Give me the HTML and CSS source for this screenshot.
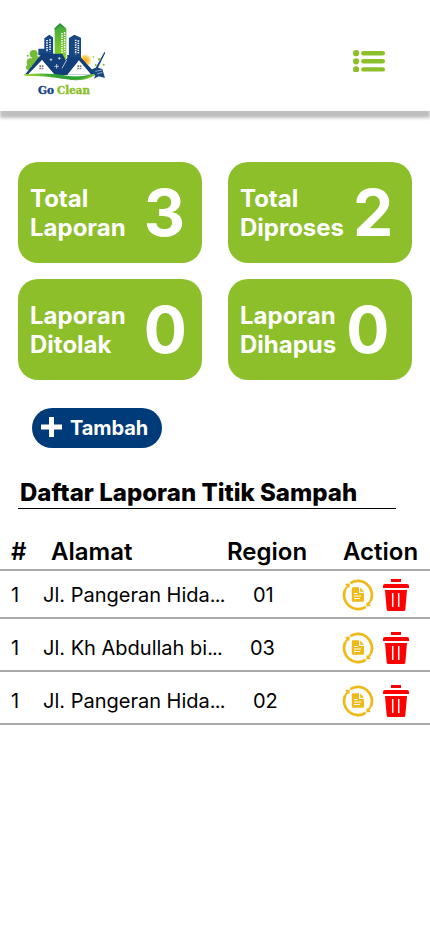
FILE: index.html
```html
<!DOCTYPE html>
<html lang="id">
<head>
<meta charset="utf-8">
<meta name="viewport" content="width=device-width, initial-scale=1">
<title>Go Clean</title>
<link rel="stylesheet" href="styles.css">
</head>
<body>
<svg class="symbols" aria-hidden="true">
  <symbol id="report" viewBox="0 0 32 32">
    <g fill="none" stroke="#efb918" stroke-width="2.8">
      <path d="M8.300 4.200A14 14 0 0 1 28.800 21.500"/>
      <path d="M23.700 27.800A14 14 0 0 1 3.200 10.500"/>
    </g>
    <path fill="#efb918" d="M3 4.900l4.800-.5-.5 4.600-1.300-.7-2 3-1.800-1 2.300-3.500zM29 27.100l-4.800.5.500-4.600 1.300.7 2-3 1.800 1-2.300 3.500z"/>
    <path fill="#efb918" d="M11 8.300h6v5.600h5v7.700q0 1.200-1.200 1.200H11q-1.200 0-1.200-1.200V9.500q0-1.200 1.200-1.200zM18.200 8.300l3.800 4.400h-3.800z"/>
    <path stroke="#fff" stroke-width="1.100" d="M12 14.500h3.600M12 17h7M12 19.500h6"/>
  </symbol>
  <symbol id="trash" viewBox="0 0 26 32">
    <path fill="#f00" d="M8 0h10v3H8zM2 5h22q2 0 2 2v2H0V7Q0 5 2 5zM2 11h22l-1.700 19.500q-.2 1.500-1.700 1.500H5.400q-1.500 0-1.700-1.500z"/>
    <path stroke="#fff" stroke-width="1.500" d="M9.700 14v14M15.700 14v14"/>
  </symbol>
</svg>

<header class="topbar">
  <svg class="logo" viewBox="0 0 300 270" role="img" aria-label="Go Clean">
    <defs>
      <linearGradient id="tower" x2="0" y2="1"><stop stop-color="#3fa83b"/><stop offset="1" stop-color="#91d52b"/></linearGradient>
      <linearGradient id="lawn"><stop stop-color="#a5d93b"/><stop offset=".5" stop-color="#239a34"/><stop offset="1" stop-color="#a3d432"/></linearGradient>
      <radialGradient id="sun"><stop stop-color="#f6a51c"/><stop offset=".55" stop-color="#ffc94f"/><stop offset="1" stop-color="#fff"/></radialGradient>
    </defs>
    <circle cx="210" cy="137" r="21" fill="url(#sun)"/>
    <g fill="#75bd35"><circle cx="56" cy="117" r="12"/><circle cx="47" cy="142" r="12"/><circle cx="62" cy="134" r="12"/><circle cx="41" cy="157" r="8"/><circle cx="38" cy="122" r="3"/></g>
    <path fill="#174783" d="M88 70l15-11 12 9v62H88zM70 101h18v20H70zM161 70l17-11 20 9v65h-37z"/>
    <path fill="#fff" d="M115 66h4v62h-4zM157 66h4v62h-4z"/>
    <path fill="url(#tower)" d="M119 40l16-15 19 16v91h-35z"/>
    <path fill="#2c943b" d="M119 40l16-15 19 16-19-8-16 12z"/>
    <g fill="none" stroke="#fff" stroke-width="5" stroke-dasharray="4 3">
      <path d="M96 75v36M105 73v36M141 54v62M149 52v60M182 74v44M190 76v42"/>
    </g>
    <path fill="#123f7a" d="M80 116h62l10 19 5-6v-9h8l1 7h31l49 53h-16H119L81 135l-44 45h-8z"/>
    <path fill="#fff" d="M42 179l39-43 38 43zM157 179l35-43 37 43z"/>
    <path fill="none" stroke="#fff" stroke-width="2" d="M141 160l14-25"/>
    <path stroke="#fff" stroke-width="2" d="M125 147v14M118 154h14M108 130v8M104 134h8M133 126v8M129 130h8"/>
    <path fill="#777" d="M73 151h5v5h-5zM80 151h5v5h-5zM73 158h5v5h-5zM80 158h5v5h-5zM187 151h5v5h-5zM194 151h5v5h-5zM187 158h5v5h-5zM194 158h5v5h-5z"/>
    <path fill="url(#lawn)" d="M28 178c48-5 92-2 128 4 39 5 72 0 103-14-31 26-64 32-104 25-42-7-75-11-127-10z"/>
    <path fill="#2fa23a" d="M82 178c40 0 68 7 92 8 24 0 42-3 60-10-25 17-51 19-79 15-28-5-46-9-73-13z"/>
    <path fill="#174783" d="M268 111l3 2-22 45 13 4 8 27-19-5-14 7 4-10-17-15 18-8z"/>
    <g fill="#82bd39"><circle cx="242" cy="150" r="3"/><circle cx="253" cy="133" r="4"/><circle cx="266" cy="149" r="3"/><circle cx="235" cy="126" r="2.500"/></g>
    <path stroke="#fff" stroke-width="1.500" d="M241 169l20-4M246 177l16-5"/>
    <g class="brand">
      <text x="69" y="236" textLength="48" lengthAdjust="spacingAndGlyphs" fill="#174783" stroke="#174783">Go</text>
      <text x="126" y="236" textLength="99" lengthAdjust="spacingAndGlyphs" fill="#8bbf2a" stroke="#8bbf2a">Clean</text>
    </g>
  </svg>
  <svg class="menu" viewBox="0 0 32 22" role="img" aria-label="Menu">
    <g fill="#8cbf2a"><circle cx="3.100" cy="3.200" r="3.100"/><circle cx="3.100" cy="11.300" r="3.100"/><circle cx="3.100" cy="19.400" r="3.100"/></g>
    <path stroke="#8cbf2a" stroke-width="4.400" stroke-linecap="round" d="M10.300 3.200h19.500M10.300 11.300h19.500M10.300 19.400h19.500"/>
  </svg>
</header>

<main>
  <section class="stats">
    <article class="card"><h2>Total<br>Laporan</h2><strong class="wide">3</strong></article>
    <article class="card"><h2>Total<br>Diproses</h2><strong>2</strong></article>
    <article class="card"><h2>Laporan<br>Ditolak</h2><strong class="wide">0</strong></article>
    <article class="card"><h2>Laporan<br>Dihapus</h2><strong class="deleted">0</strong></article>
  </section>

  <button class="add" type="button">
    <svg viewBox="0 0 21 20" aria-hidden="true"><path d="M10.500 0v20M0 10h21"/></svg>
    <span>Tambah</span>
  </button>

  <h1>Daftar Laporan Titik Sampah</h1>

  <section class="table">
    <div class="row head"><span>#</span><span class="address">Alamat</span><span class="region">Region</span><span class="action">Action</span></div>
    <div class="row"><span>1</span><span>Jl. Pangeran Hida<span class="dots">...</span></span><span class="region">01</span><span class="action"><svg class="report"><use href="#report"/></svg><svg class="trash"><use href="#trash"/></svg></span></div>
    <div class="row"><span>1</span><span>Jl. Kh Abdullah bi<span class="dots">...</span></span><span class="region near">03</span><span class="action"><svg class="report"><use href="#report"/></svg><svg class="trash"><use href="#trash"/></svg></span></div>
    <div class="row"><span>1</span><span>Jl. Pangeran Hida<span class="dots">...</span></span><span class="region">02</span><span class="action"><svg class="report"><use href="#report"/></svg><svg class="trash"><use href="#trash"/></svg></span></div>
  </section>
</main>
</body>
</html>
```
FILE: styles.css
```css
* { box-sizing: border-box; }
body {
  margin: 0;
  min-height: 932px;
  background: #fff;
  color: #000;
  font-family: Inter, sans-serif;
}
svg { display: block; flex: none; }
.symbols { display: none; }
.topbar {
  display: flex;
  align-items: flex-start;
  justify-content: space-between;
  height: 111px;
  padding: 15px 45px 0 15px;
  box-shadow: 0 7px 3px rgba(0, 0, 0, .25);
}
.logo { width: 100px; height: 90px; }
.brand { font: bold 31px "DejaVu Serif", serif; stroke-width: 1.2px; }
.menu { width: 32px; height: 22px; margin-top: 35px; }
.stats {
  display: grid;
  grid-template-columns: 184px 184px;
  gap: 16px 26px;
  padding: 51px 18px 0;
}
.card {
  display: flex;
  align-items: center;
  gap: 10px;
  height: 101px;
  padding-left: 12px;
  border-radius: 20px;
  background: #8cbf2a;
  color: #fff;
}
.card h2 { margin: 0; font-size: 24px; font-weight: 700; line-height: 29px; }
.card strong { margin-left: -1px; font-size: 64px; font-weight: 700; line-height: 77px; }
.card .wide { margin-left: 8px; }
.card .deleted { margin-left: 0; }
.add {
  display: flex;
  align-items: center;
  gap: 8px;
  width: 130px;
  height: 40px;
  margin: 28px 0 0 32px;
  padding: 0 0 2px 9px;
  border: 0;
  border-radius: 20px;
  background: #003b79;
  color: #fff;
  font: 700 20px/24px Inter, sans-serif;
  letter-spacing: -.1px;
}
.add span { padding-top: 2px; }
.add svg { width: 21px; height: 20px; fill: none; stroke: #fff; stroke-width: 5; }
h1 {
  width: 378px;
  height: 31px;
  margin: 30px 0 0 18px;
  padding-left: 2px;
  border-bottom: 1px solid #000;
  font-size: 24px;
  font-weight: 800;
  line-height: 29px;
  letter-spacing: .02px;
  white-space: nowrap;
}
.table { padding-top: 24px; }
.row {
  display: grid;
  grid-template-columns: 32px 184px 117px 86px;
  align-items: center;
  height: 53px;
  padding: 6px 0 0 11px;
  border-bottom: 2px solid #a9a9a9;
  font-size: 20px;
  line-height: 24px;
  white-space: nowrap;
}
.row.head { height: 38px; padding-top: 1px; font-size: 24px; font-weight: 600; line-height: 35px; }
.row.head + .row { height: 48px; padding-top: 1px; }
.dots { letter-spacing: -.8px; }
.head .address { padding-left: 8px; }
.region { padding-left: 26px; }
.region.near { padding-left: 23px; }
.head .region { padding-left: 0; }
.head .action { margin-left: -1px; }
.action { display: flex; gap: 9px; }
.report { width: 32px; height: 32px; margin-left: -2px; }
.trash { width: 26px; height: 32px; }
```
